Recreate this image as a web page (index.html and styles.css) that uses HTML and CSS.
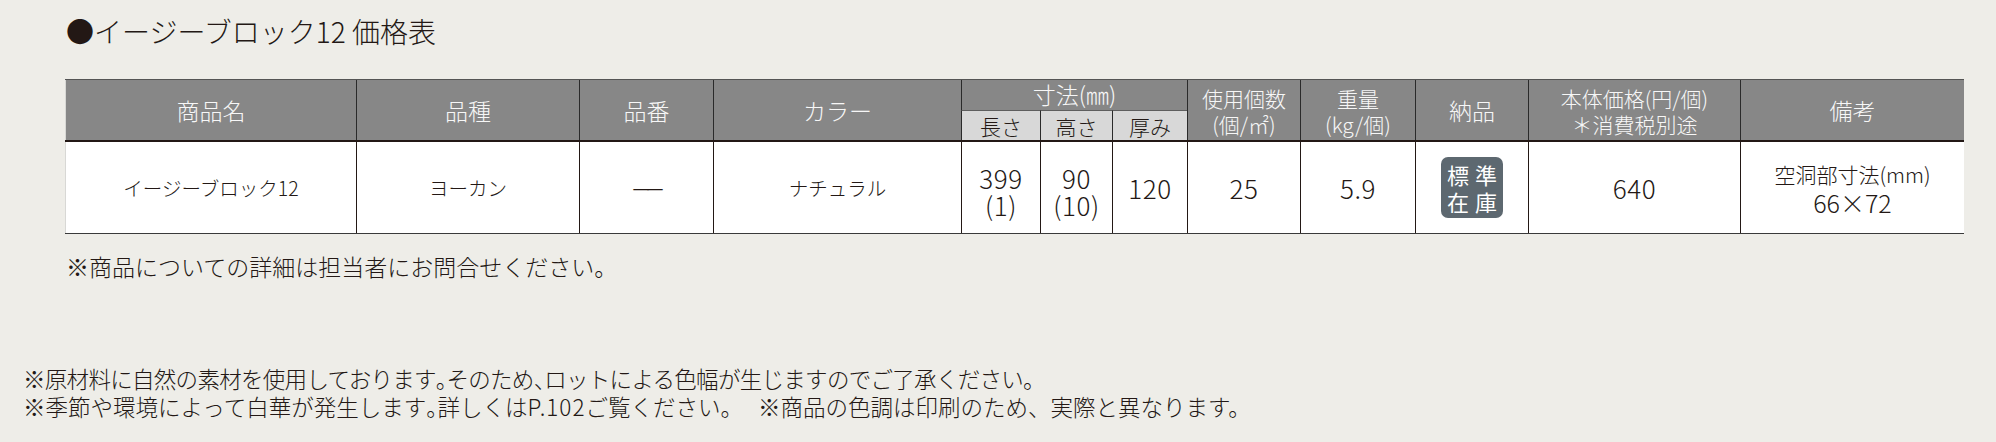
FILE: index.html
```html
<!DOCTYPE html>
<html lang="ja">
<head>
<meta charset="utf-8">
<title>イージーブロック12 価格表</title>
<link rel="stylesheet" href="styles.css">
</head>
<body>
<div class="page">
  <h1 class="title"><span class="dot">●</span>イージーブロック12 価格表</h1>

  <div class="grid">
    <div class="th span2 first"><span class="txt">商品名</span></div>
    <div class="th span2"><span class="txt">品種</span></div>
    <div class="th span2"><span class="txt">品番</span></div>
    <div class="th span2"><span class="txt">カラー</span></div>
    <div class="th dim"><span class="txt">寸法(㎜)</span></div>
    <div class="th span2 multi"><span class="txt">使用個数<br>(個/㎡)</span></div>
    <div class="th span2 multi"><span class="txt">重量<br>(kg/個)</span></div>
    <div class="th span2"><span class="txt">納品</span></div>
    <div class="th span2 multi"><span class="txt">本体価格(円/個)<br>＊消費税別途</span></div>
    <div class="th span2"><span class="txt">備考</span></div>
    <div class="th sub"><span class="txt">長さ</span></div>
    <div class="th sub"><span class="txt">高さ</span></div>
    <div class="th sub"><span class="txt">厚み</span></div>
    <div class="rule"></div>

    <div class="td first"><span class="txt">イージーブロック12</span></div>
    <div class="td"><span class="txt">ヨーカン</span></div>
    <div class="td"><span class="txt dash">——</span></div>
    <div class="td"><span class="txt">ナチュラル</span></div>
    <div class="td num two"><span class="txt">399<br>(1)</span></div>
    <div class="td num two"><span class="txt">90<br>(10)</span></div>
    <div class="td num"><span class="txt">120</span></div>
    <div class="td num"><span class="txt">25</span></div>
    <div class="td num"><span class="txt">5.9</span></div>
    <div class="td"><span class="badge">標準<br>在庫</span></div>
    <div class="td num"><span class="txt">640</span></div>
    <div class="td remark"><span class="txt">空洞部寸法(mm)<br><span class="big">66×72</span></span></div>
  </div>

  <p class="note">※商品についての詳細は担当者にお問合せください。</p>

  <div class="foot">
    <p class="l1">※原材料に自然の素材を使用しております<span class="p">。</span>そのため<span class="p">、</span>ロットによる色幅が生じますのでご了承ください。</p>
    <p>※季節や環境によって白華が発生します<span class="p">。</span>詳しくは<span class="pg">P.102</span>ご覧ください。<span class="gap">※商品の色調は印刷のため、実際と異なります。</span></p>
  </div>
</div>
</body>
</html>
```

FILE: styles.css
```css
html, body {
  margin: 0;
  padding: 0;
  background: #eeede8;
}

body {
  font-family: "Noto Sans CJK JP", "Noto Sans", sans-serif;
  color: #231815;
  width: 1996px;
  height: 442px;
  overflow: hidden;
}

.page {
  display: flex;
  flex-direction: column;
}

.title {
  margin: 17px 0 34px 66px;
  font-size: 28px;
  line-height: 28px;
  font-weight: 300;
  color: #231815;
}

.title .dot {
  font-weight: 400;
}

.grid {
  margin-left: 65px;
  width: 1899px;
  display: grid;
  grid-template-columns: 291px 223px 134px 248px 79px 72px 75px 113px 115px 113px 212px 224px;
  grid-template-rows: 30px 30px 2px 91px;
  border-top: 1px solid #545454;
  border-bottom: 1px solid #3a3a3a;
  background: #ffffff;
}

.txt {
  display: block;
}

.th {
  box-sizing: border-box;
  background: #878787;
  color: #f7f7f7;
  border-left: 1px solid #2a2a2a;
  display: flex;
  align-items: center;
  justify-content: center;
  text-align: center;
  font-size: 23px;
  line-height: 26px;
  font-weight: 300;
}

.th.first,
.td.first {
  border-left: 1px solid #d8d8d5;
}

.th.span2 {
  grid-row: span 2;
}

.th.dim {
  grid-column: span 3;
  font-size: 23px;
  padding-bottom: 2px;
}

.th.multi {
  font-size: 21px;
  line-height: 26px;
  padding-top: 2px;
}

.th.sub {
  background: #d8d8d8;
  color: #231815;
  border-top: 1px solid #5e5e5e;
  font-size: 21px;
}

.rule {
  grid-column: 1 / -1;
  background: #231815;
}

.td {
  box-sizing: border-box;
  background: #ffffff;
  border-left: 1px solid #231815;
  display: flex;
  align-items: center;
  justify-content: center;
  text-align: center;
  font-size: 19.5px;
  line-height: 28px;
  font-weight: 300;
}

.td.num {
  font-size: 26px;
  line-height: 27px;
  letter-spacing: 0.6px;
}

.td.num.two {
  padding-top: 6px;
}

.dash {
  font-family: "DejaVu Sans", sans-serif;
  font-size: 17px;
  letter-spacing: -3px;
  font-weight: 400;
}

.td.remark {
  font-size: 21px;
  line-height: 28px;
  padding-top: 2px;
}

.td.remark .big {
  font-size: 25px;
}

.badge {
  display: flex;
  align-items: center;
  justify-content: center;
  width: 62px;
  height: 61px;
  border-radius: 7px;
  background: #5d6870;
  color: #ffffff;
  font-size: 22px;
  line-height: 27px;
  letter-spacing: 6px;
  padding-left: 6px;
  box-sizing: border-box;
  font-weight: 400;
}

.note {
  margin: 18px 0 0 66px;
  font-size: 23px;
  line-height: 28px;
  font-weight: 300;
}

.foot {
  margin: 84px 0 0 23px;
  font-size: 22.5px;
  line-height: 28px;
  font-weight: 300;
}

.foot p {
  margin: 0;
}

.foot .l1 {
  letter-spacing: -0.7px;
}

.p {
  font-feature-settings: "halt";
}

.pg {
  letter-spacing: 1px;
}

.gap {
  margin-left: 15px;
}
```
